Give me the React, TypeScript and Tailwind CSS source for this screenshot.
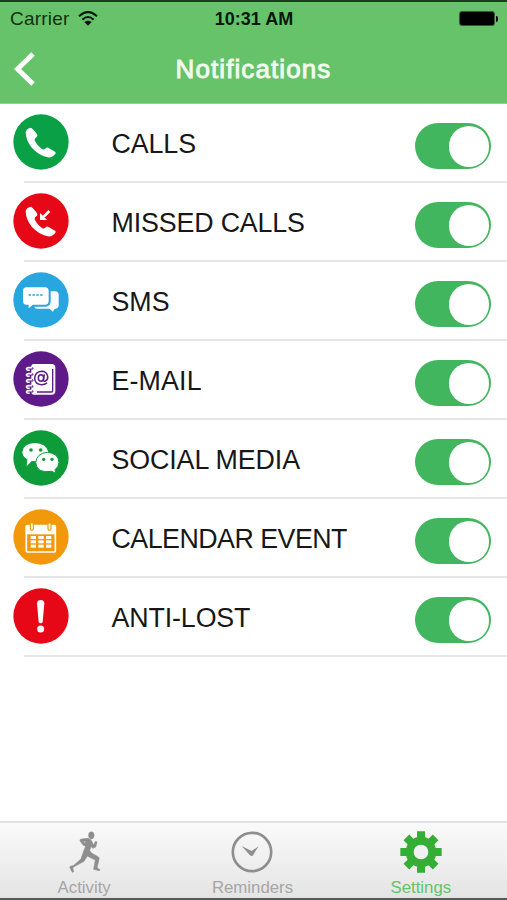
import React from "react";

const App = () => {
  return (
    <div className="flex h-[900px] w-[507px] flex-col overflow-hidden bg-white font-['Liberation_Sans',Arial,sans-serif]">
      <header className="h-[104px] border-t-2 border-b border-t-[#1c3a1e] border-b-[#a9bfa9] bg-[#67c36a]">
        <div className="grid h-[33px] grid-cols-3 items-center pr-[9px] pl-[10px]">
          <div className="flex items-center gap-[9px]">
            <span className="text-[19px] leading-none tracking-[0.2px] text-[#12300f]">
              Carrier
            </span>
            <WifiIcon />
          </div>
          <span className="text-center text-[18px] leading-none font-bold text-[#08180a]">
            10:31 AM
          </span>
          <div className="flex items-center justify-end">
            <div className="h-[15px] w-[36px] rounded-[3px] border border-[#2d5a2f] bg-black" />
            <div className="ml-px h-[6px] w-[2px] rounded-r-sm bg-black" />
          </div>
        </div>
        <div className="grid h-[67px] grid-cols-[1fr_auto_1fr] items-center">
          <button className="pl-[14px]" aria-label="Back">
            <svg width="22" height="34" viewBox="0 0 22 34" fill="none">
              <path d="M19 2 L3.5 17 L19 32" stroke="#fff" strokeWidth="5" />
            </svg>
          </button>
          <h1 className="text-[26px] leading-none tracking-[1.1px] text-[#f0fbef] [-webkit-text-stroke:0.9px_#f0fbef]">
            Notifications
          </h1>
        </div>
      </header>

      <ul className="flex-1">
        {alerts.map((alert) => (
          <li key={alert.label} className="flex h-[79px] flex-col">
            <div className="flex flex-1 items-center pr-[16.5px] pl-[12.5px]">
              <svg width="56" height="56" viewBox="0 0 168 168" className="mb-px shrink-0">
                <circle cx="84" cy="84" r="83" fill={alert.color} />
                {alert.icon}
              </svg>
              <span
                className={`mt-[3px] ml-[43px] flex-1 text-[26.8px] leading-none whitespace-nowrap text-[#171717] ${alert.tracking}`}
              >
                {alert.label}
              </span>
              <Toggle />
            </div>
            <div className="ml-[24px] h-[2px] bg-[#e5e6e7]" />
          </li>
        ))}
      </ul>

      <nav className="grid h-[79px] grid-cols-3 border-t-2 border-b-2 border-t-[#e2e2e2] border-b-[#5c5759] bg-linear-to-b from-[#fafafa] to-[#e4e4e4] pr-[2px]">
        {tabs.map((tab) => (
          <a
            key={tab.label}
            className={`flex flex-col items-center pt-[8px] ${
              tab.active ? "text-[#63c466]" : "text-[#a5a5a5]"
            }`}
          >
            {tab.icon}
            <span className="mt-[7px] text-[16.8px] leading-none">{tab.label}</span>
          </a>
        ))}
      </nav>
    </div>
  );
};

export default App;

const Toggle = () => (
  <div className="mt-[7px] flex h-[46px] w-[76px] shrink-0 items-center justify-end rounded-full bg-[#41b65e] pr-[2px]">
    <div className="h-[41px] w-[40px] rounded-full bg-white" />
  </div>
);

const WifiIcon = () => (
  <svg width="20" height="15" viewBox="0 0 60 45" fill="none" stroke="#08180a" strokeWidth="6">
    <path d="M3 16 Q30 -9 57 16" />
    <path d="M13 26 Q30 10 47 26" />
    <path d="M30 44 L19 33 Q30 24 41 33 Z" fill="#08180a" stroke="none" />
  </svg>
);

const handset =
  "M38 54 Q39 45 53 41 Q58 41 72 61 Q75 65 71 69 Q64 73 65 79 Q72 95 88 106 Q93 108 98 103 Q102 99 107 102 L127 114 Q130 117 126 121 Q118 132 104 130 Q77 124 57 102 Q38 79 38 54 Z";

const alerts = [
  {
    label: "CALLS",
    color: "#0aa146",
    tracking: "tracking-[-0.1px]",
    icon: <path d={handset} fill="#fff" />,
  },
  {
    label: "MISSED CALLS",
    color: "#e60817",
    tracking: "tracking-[-0.15px]",
    icon: (
      <>
        <path d={handset} fill="#fff" />
        <path d="M109 54 L87 76" stroke="#fff" strokeWidth="8" />
        <path d="M81 60 V81 H103 L95 74 L88 67 Z" fill="#fff" />
      </>
    ),
  },
  {
    label: "SMS",
    color: "#27a6df",
    tracking: "tracking-normal",
    icon: (
      <>
        <path
          d="M40 46 H96 Q107 46 107 57 V87 Q107 98 96 98 H60 L47 109 V98 H40 Q30 98 30 87 V57 Q30 46 40 46 Z"
          fill="#fff"
        />
        <path
          d="M113 58 H126 Q137 58 137 69 V100 Q137 110 127 110 H125 L120 119 L109 110 H72 Q65 110 64 104 H99 Q113 102 113 88 Z"
          fill="#fff"
        />
        <path d="M47 69 H89" stroke="#27a6df" strokeWidth="6" strokeDasharray="7 4.5" opacity="0.8" />
      </>
    ),
  },
  {
    label: "E-MAIL",
    color: "#5d1a88",
    tracking: "tracking-[0.15px]",
    icon: (
      <>
        <path
          d="M62 39 H116 Q127 39 127 50 V120 Q127 131 116 131 H62 Q55 131 55 124 V46 Q55 39 62 39 Z"
          fill="#fff"
        />
        <path d="M119 54 V119 Q119 123 115 123 H72" stroke="#5d1a88" strokeWidth="4" fill="none" />
        {[50, 68, 86, 104, 119].map((y) => (
          <g key={y} fill="none">
            <circle cx="57" cy={y + 2} r="4" fill="#5d1a88" />
            <path d={`M58 ${y} H47 Q39 ${y} 41 ${y + 5} Q43 ${y + 9} 50 ${y + 7}`} stroke="#fff" strokeWidth="5" />
          </g>
        ))}
        <g fill="none" stroke="#5d1a88" strokeWidth="4.5">
          <ellipse cx="84" cy="81" rx="8" ry="10" />
          <path d="M94 70 L91 87 Q92 92 97 90 Q106 85 104 76 Q101 61 86 61 Q66 63 65 82 Q66 101 86 101 Q96 101 102 95" />
        </g>
      </>
    ),
  },
  {
    label: "SOCIAL MEDIA",
    color: "#0e9c3a",
    tracking: "tracking-[-0.1px]",
    icon: (
      <>
        <path
          d="M66 39 Q100 40 106 66 Q82 68 70 94 L56 93 L41 109 L43 88 Q28 79 28 66 Q31 40 66 39 Z"
          fill="#fff"
        />
        <path
          d="M103 67 Q136 69 138 97 Q137 111 126 119 L128 130 L116 124 Q71 131 68 98 Q71 69 103 67 Z"
          fill="#fff"
          stroke="#0e9c3a"
          strokeWidth="3"
        />
        <g fill="#0e9c3a">
          <circle cx="54" cy="60" r="5.5" />
          <circle cx="83" cy="60" r="5.5" />
          <circle cx="92" cy="88" r="5" />
          <circle cx="117" cy="88" r="5" />
        </g>
      </>
    ),
  },
  {
    label: "CALENDAR EVENT",
    color: "#f2980b",
    tracking: "tracking-[-0.52px]",
    icon: (
      <>
        <rect x="40" y="50" width="87" height="79" rx="3" fill="none" stroke="#fff" strokeWidth="5" />
        <path d="M38 50 H129 V76 H38 Z" fill="#fff" />
        {[56, 109].map((x) => (
          <rect key={x} x={x - 4} y="41" width="9" height="23" rx="4.5" fill="#fff" stroke="#f2980b" strokeWidth="3.5" />
        ))}
        {[81, 94, 107].map((y) =>
          [53, 76, 99].map((x) => (
            <rect key={`${x}-${y}`} x={x} y={y} width="16" height="9" fill="#fff" />
          ))
        )}
      </>
    ),
  },
  {
    label: "ANTI-LOST",
    color: "#e60817",
    tracking: "tracking-[-0.12px]",
    icon: (
      <>
        <path d="M72 46 Q73 36 83 36 Q93 36 94 46 L89 102 Q88 106 83 106 Q78 106 77 102 Z" fill="#fff" />
        <circle cx="83" cy="123" r="10.5" fill="#fff" />
      </>
    ),
  },
];

const tabs = [
  {
    label: "Activity",
    active: false,
    icon: (
      <svg width="42" height="42" viewBox="0 0 126 126" fill="#8e8e8e" stroke="#8e8e8e">
        <ellipse cx="85" cy="13" rx="8.5" ry="11" />
        <path
          d="M52 25 L74 22 Q84 24 88 34 L91 43 L98 31 L102 33 L98 48 L89 52 L84 46 L80 58 L84 65 L106 78 Q109 80 108 84 L102 111 L110 115 L109 119 L92 115 L97 87 L73 75 L63 91 L35 106 L29 111 L32 122 L28 124 L20 108 L24 105 L31 104 L54 84 L63 58 L68 46 L60 42 L51 29 Z M61 31 L65 37 L69 31 Z"
          fillRule="evenodd"
          strokeWidth="2"
        />
      </svg>
    ),
  },
  {
    label: "Reminders",
    active: false,
    icon: (
      <svg width="42" height="42" viewBox="0 0 126 126">
        <circle cx="63" cy="63" r="57.5" fill="none" stroke="#8e8e8e" strokeWidth="8" />
        <path d="M32 45 L62 60 L83 46 L65 74 Q61 77 57 73 Z" fill="#8e8e8e" />
      </svg>
    ),
  },
  {
    label: "Settings",
    active: true,
    icon: (
      <svg width="42" height="42" viewBox="0 0 126 126" fill="#36ae35">
        {[0, 45, 90, 135].map((deg) => (
          <path
            key={deg}
            transform={`rotate(${deg} 63 63)`}
            d="M51 1 H75 V38 H51 Z M51 88 H75 V125 H51 Z"
          />
        ))}
        <circle cx="63" cy="63" r="34" fill="none" stroke="#36ae35" strokeWidth="24" />
      </svg>
    ),
  },
];
